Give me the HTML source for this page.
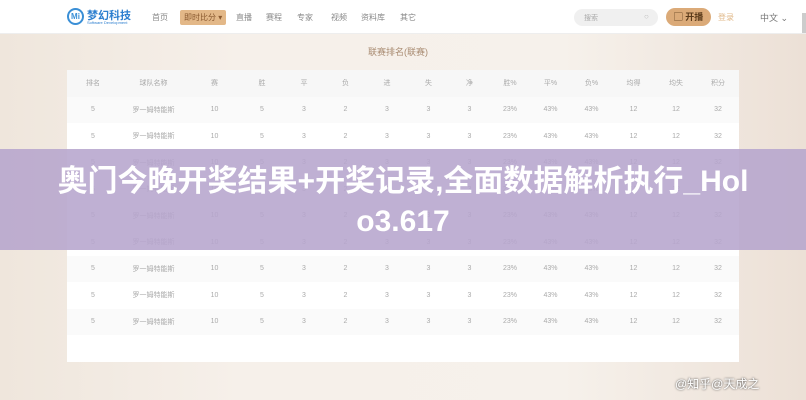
<!DOCTYPE html>
<html><head><meta charset="utf-8"><style>
*{margin:0;padding:0;box-sizing:border-box}
body{width:806px;height:400px;overflow:hidden;position:relative;font-family:"Liberation Sans","Noto Sans CJK SC",sans-serif;background:linear-gradient(90deg,#efe6dc 0%,#f6f0ea 30%,#f6f1eb 70%,#ece0d6 100%)}
.hdr{position:absolute;left:0;top:0;width:806px;height:34px;background:#fff;border-bottom:1px solid #eee}
.hdr span{position:absolute;font-size:8px;color:#888;top:12px}
.t{position:absolute;font-size:9px;color:#999}
table{position:absolute;left:67px;top:70px;width:672px;border-collapse:collapse;background:#fff;font-size:7px;color:#aaa;text-align:center;table-layout:fixed}
td{height:26.5px}
tr:nth-child(even) td{background:#fafafa}
tr:first-child td{background:#f7f7f7}
.ban{position:absolute;left:0;top:149px;width:806px;height:101px;background:rgba(182,165,205,0.88);color:#fff;font-weight:bold;font-size:30px;text-align:center;line-height:40px;padding:13px 52px 0;word-break:break-all}
</style></head><body>
<div class="hdr">
<div style="position:absolute;left:67px;top:8px;width:17px;height:17px;border:2px solid #3a8fd6;border-radius:50%;font-size:8px;color:#3a8fd6;font-weight:bold;text-align:center;line-height:13px">Mi</div>
<div style="position:absolute;left:87px;top:7px;font-size:11px;font-weight:bold;color:#2d7fcf">梦幻科技</div>
<div style="position:absolute;left:87px;top:20px;font-size:4px;color:#2d7fcf">Software Development</div>
<span style="left:152px">首页</span>
<span style="left:180px;top:10px;background:#e3b888;color:#8a5a30;padding:2px 4px;border-radius:2px">即时比分 ▾</span>
<span style="left:236px">直播</span>
<span style="left:266px">赛程</span>
<span style="left:297px">专家</span>
<span style="left:331px">视频</span>
<span style="left:361px">资料库</span>
<span style="left:400px">其它</span>
<div style="position:absolute;left:574px;top:9px;width:84px;height:17px;background:#f0f0f0;border-radius:9px;font-size:7px;color:#aaa;padding:4px 10px">搜索<span style="left:70px;top:3px;color:#bbb">○</span></div>
<div style="position:absolute;left:666px;top:8px;width:45px;height:18px;background:#dbaa78;border-radius:9px;font-size:9px;color:#5a3a1a;font-weight:bold;text-align:center;line-height:18px">▢ 开播</div>
<span style="left:718px;color:#e0b888">登录</span>
<span style="left:760px;color:#777;font-size:9px;top:11px">中文 ⌄</span>
<div style="position:absolute;left:802px;top:13px;width:4px;height:20px;background:#ccc"></div>
</div>
<div class="t" style="left:368px;top:45px;color:#a88a70">联赛排名(联赛)</div>
<table>
<colgroup><col style="width:52px"><col style="width:69px"><col style="width:53px"><col style="width:42px"><col style="width:42px"><col style="width:41px"><col style="width:42px"><col style="width:41px"><col style="width:41px"><col style="width:40px"><col style="width:41px"><col style="width:41px"><col style="width:43px"><col style="width:42px"><col style="width:42px"></colgroup>
<tr><td>排名</td><td>球队名称</td><td>赛</td><td>胜</td><td>平</td><td>负</td><td>进</td><td>失</td><td>净</td><td>胜%</td><td>平%</td><td>负%</td><td>均得</td><td>均失</td><td>积分</td></tr>
<tr><td>5</td><td>罗一姆特能斯</td><td>10</td><td>5</td><td>3</td><td>2</td><td>3</td><td>3</td><td>3</td><td>23%</td><td>43%</td><td>43%</td><td>12</td><td>12</td><td>32</td></tr>
<tr><td>5</td><td>罗一姆特能斯</td><td>10</td><td>5</td><td>3</td><td>2</td><td>3</td><td>3</td><td>3</td><td>23%</td><td>43%</td><td>43%</td><td>12</td><td>12</td><td>32</td></tr>
<tr><td>5</td><td>罗一姆特能斯</td><td>10</td><td>5</td><td>3</td><td>2</td><td>3</td><td>3</td><td>3</td><td>23%</td><td>43%</td><td>43%</td><td>12</td><td>12</td><td>32</td></tr>
<tr><td>5</td><td>罗一姆特能斯</td><td>10</td><td>5</td><td>3</td><td>2</td><td>3</td><td>3</td><td>3</td><td>23%</td><td>43%</td><td>43%</td><td>12</td><td>12</td><td>32</td></tr>
<tr><td>5</td><td>罗一姆特能斯</td><td>10</td><td>5</td><td>3</td><td>2</td><td>3</td><td>3</td><td>3</td><td>23%</td><td>43%</td><td>43%</td><td>12</td><td>12</td><td>32</td></tr>
<tr><td>5</td><td>罗一姆特能斯</td><td>10</td><td>5</td><td>3</td><td>2</td><td>3</td><td>3</td><td>3</td><td>23%</td><td>43%</td><td>43%</td><td>12</td><td>12</td><td>32</td></tr>
<tr><td>5</td><td>罗一姆特能斯</td><td>10</td><td>5</td><td>3</td><td>2</td><td>3</td><td>3</td><td>3</td><td>23%</td><td>43%</td><td>43%</td><td>12</td><td>12</td><td>32</td></tr>
<tr><td>5</td><td>罗一姆特能斯</td><td>10</td><td>5</td><td>3</td><td>2</td><td>3</td><td>3</td><td>3</td><td>23%</td><td>43%</td><td>43%</td><td>12</td><td>12</td><td>32</td></tr>
<tr><td>5</td><td>罗一姆特能斯</td><td>10</td><td>5</td><td>3</td><td>2</td><td>3</td><td>3</td><td>3</td><td>23%</td><td>43%</td><td>43%</td><td>12</td><td>12</td><td>32</td></tr>
<tr><td style="height:12px"></td><td></td><td></td><td></td><td></td><td></td><td></td><td></td><td></td><td></td><td></td><td></td><td></td><td></td><td></td></tr>
</table>
<div class="ban">奥门今晚开奖结果+开奖记录,全面数据解析执行_Holo3.617</div>
<div style="position:absolute;left:675px;top:375px;font-size:12px;color:#fff;text-shadow:0 0 2px #333">@知乎@天成之</div>
</body></html>
